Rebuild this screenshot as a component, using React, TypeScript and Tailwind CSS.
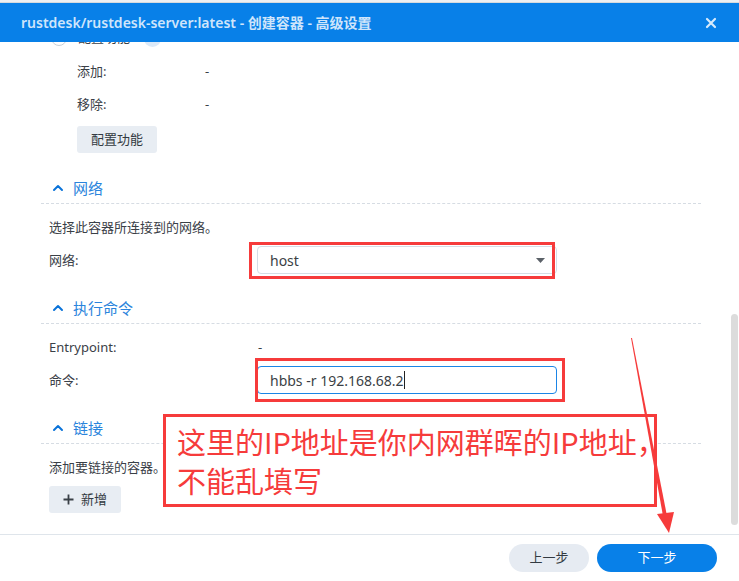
import * as React from 'react';

const cjk = { fontFamily: '"Noto Sans", "Noto Sans CJK SC", sans-serif' };

function ChevronUp() {
  return (
    <svg width="12" height="12" viewBox="0 0 12 12" className="shrink-0">
      <polyline points="2,8 6,4 10,8" fill="none" stroke="#0a73d9" strokeWidth="2" strokeLinecap="round" strokeLinejoin="round" />
    </svg>
  );
}

function SectionHeader({ title, className }: { title: string; className: string }) {
  return (
    <div className={`${className} h-[26px] ml-[-8px] mr-[38px] border-b border-dashed border-[#d6dce3] flex items-start`}>
      <div className="h-[20px] flex items-center gap-[9px] pl-[11px]">
        <ChevronUp />
        <span className="text-[15px] text-[#2a84dc] leading-[20px]">{title}</span>
      </div>
    </div>
  );
}

function Row({ label, children, className }: { label: string; children: React.ReactNode; className: string }) {
  return (
    <div className={`${className} flex items-center`}>
      <div className="w-[208px] shrink-0 text-[13px] text-[#3a4047]">{label}</div>
      {children}
    </div>
  );
}

export default function App() {
  return (
    <div className="relative w-[739px] h-[581px] overflow-hidden bg-white flex flex-col" style={cjk}>
      <div className="h-[3px] bg-[#eef0f2] border-b border-[#d7dadd]" />
      <header className="h-[39px] shrink-0 bg-[#0880e8] flex items-center justify-between pl-[21px] pr-[22px] z-10">
        <h1 className="text-[14px] font-semibold text-[#cfe5fb]">rustdesk/rustdesk-server:latest - 创建容器 - 高级设置</h1>
        <svg width="12" height="12" viewBox="0 0 12 12">
          <path d="M2 2 L10 10 M10 2 L2 10" stroke="#d6eafc" strokeWidth="2.2" strokeLinecap="round" />
        </svg>
      </header>

      <main className="relative flex-1 overflow-hidden pl-[49px] flex flex-col">
        {/* row scrolled mostly under the header */}
        <div className="h-[18px] -mt-[13px] ml-[2px] flex items-center">
          <span className="w-[16px] h-[16px] rounded-full border border-[#c8d0d8] bg-white" />
          <span className="ml-[11px] text-[13px] text-[#3a4047]">配置功能</span>
          <span className="ml-[14px] w-[17px] h-[17px] rounded-full bg-[#dbe9f8]" />
        </div>

        <div className="mt-[15px] h-[20px] pl-[28px] flex items-center text-[13px] text-[#3a4047]">
          <span className="w-[128px]">添加:</span>
          <span>-</span>
        </div>
        <div className="mt-[13px] h-[20px] pl-[28px] flex items-center text-[13px] text-[#3a4047]">
          <span className="w-[128px]">移除:</span>
          <span>-</span>
        </div>
        <div className="mt-[11px] pl-[28px]">
          <button className="h-[27px] w-[80px] rounded-[3px] bg-[#e8edf3] text-[13px] text-[#333a41]">配置功能</button>
        </div>

        <SectionHeader title="网络" className="mt-[25px]" />
        <div className="mt-[13px] h-[20px] flex items-center text-[13px] text-[#3a4047]">选择此容器所连接到的网络。</div>
        <Row label="网络:" className="mt-[9px]">
          <div className="relative">
            <div className="w-[300px] h-[28px] rounded-[4px] border border-[#d5dde6] bg-white flex items-center justify-between pl-[12px] pr-[11px]">
              <span className="text-[14px] text-[#3b3f45]">host</span>
              <svg width="9" height="5" viewBox="0 0 9 5">
                <polygon points="0,0 9,0 4.5,5" fill="#5b6168" />
              </svg>
            </div>
            <div className="absolute -left-[8px] right-[2px] -top-[4px] -bottom-[5px] border-[3px] border-[#f63b3b]" />
          </div>
        </Row>

        <SectionHeader title="执行命令" className="mt-[24px]" />
        <Row label="Entrypoint:" className="mt-[13px] h-[20px]">
          <span className="text-[13px] text-[#3a4047] pl-[1px]">-</span>
        </Row>
        <Row label="命令:" className="mt-[9px]">
          <div className="relative">
            <div className="w-[300px] h-[28px] rounded-[4px] border border-[#1b85e6] bg-white flex items-center pl-[12px]">
              <span className="text-[14px] text-[#3b3f45]">hbbs -r 192.168.68.2</span>
              <span className="w-px h-[18px] bg-[#222] ml-px" />
            </div>
            <div className="absolute -left-[2px] -right-[8px] -top-[8px] -bottom-[8px] border-[3px] border-[#f63b3b]" />
          </div>
        </Row>

        <SectionHeader title="链接" className="mt-[24px]" />
        <div className="mt-[13px] h-[20px] flex items-center text-[13px] text-[#3a4047]">添加要链接的容器。</div>
        <div className="mt-[9px]">
          <button className="h-[27px] w-[72px] rounded-[3px] bg-[#e8edf3] text-[13px] text-[#333a41] flex items-center justify-center gap-[7px]">
            <svg width="11" height="11" viewBox="0 0 11 11">
              <path d="M5.5 0.5 V10.5 M0.5 5.5 H10.5" stroke="#3a4047" strokeWidth="1.8" />
            </svg>
            新增
          </button>
        </div>

        <div className="absolute right-[1px] top-[272px] h-[211px] w-[7px] rounded-full bg-[#dcdcdc]" />
      </main>

      <footer className="h-[47px] shrink-0 border-t border-[#dfe5eb] flex items-center justify-end gap-[8px] pr-[22px]">
        <button className="h-[28px] w-[80px] rounded-full bg-[#e6ebf2] text-[13px] text-[#333a41]">上一步</button>
        <button className="h-[28px] w-[120px] rounded-full bg-[#0880e8] text-[13px] text-white">下一步</button>
      </footer>

      <div className="absolute left-[163px] top-[414px] w-[494px] h-[93px] border-[3px] border-[#f63b3b] bg-white pl-[11px] pt-[5px]">
        <p className="text-[29px] leading-[39px] text-[#f63b3b] whitespace-nowrap" style={{ fontFamily: '"Noto Sans CJK SC", sans-serif' }}>
          这里的IP地址是你内网群晖的IP地址，
          <br />
          不能乱填写
        </p>
      </div>

      <svg className="absolute left-0 top-0 pointer-events-none" width="739" height="581" viewBox="0 0 739 581">
        <polygon points="631,338 632,338 667,516 663,516" fill="#f63b3b" />
        <polygon points="657,514 674,512 669,533" fill="#f63b3b" />
      </svg>
    </div>
  );
}
